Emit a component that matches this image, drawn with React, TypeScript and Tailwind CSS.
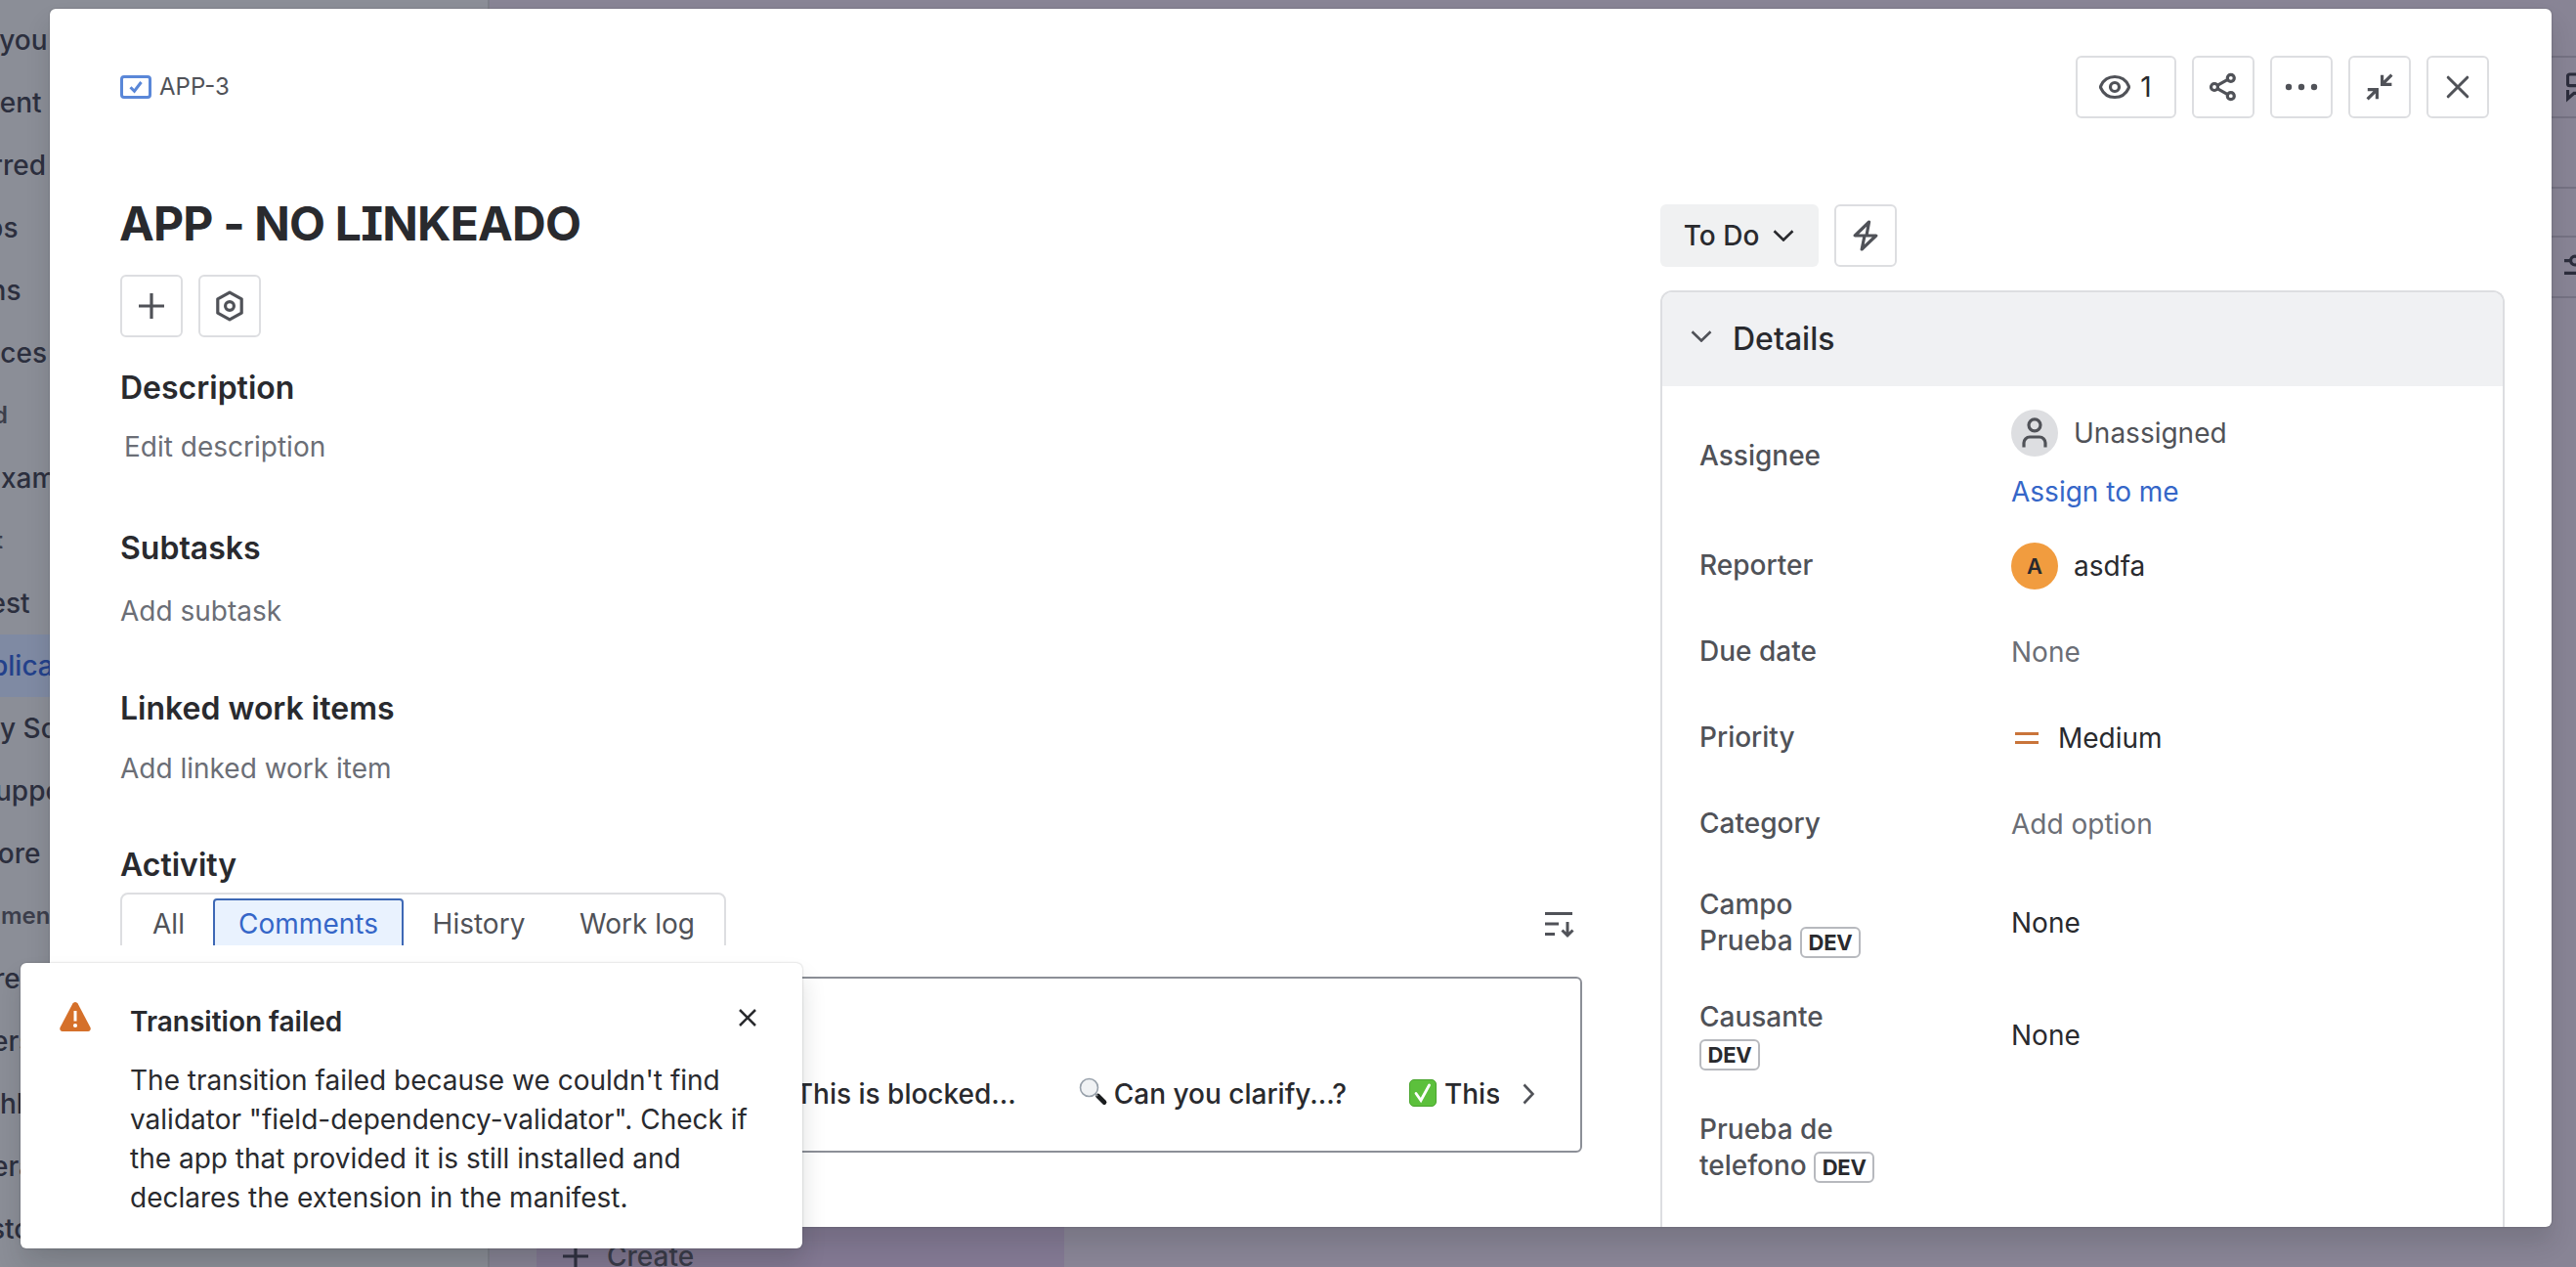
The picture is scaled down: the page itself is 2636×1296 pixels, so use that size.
import { ReactNode } from "react";

type SidebarItem = {
  text: string;
  left?: number;
  right?: number;
  muted?: boolean;
  active?: boolean;
};

const sidebarItems: SidebarItem[] = [
  { text: "For you", right: 48.5 },
  { text: "Recent", right: 42.5 },
  { text: "Starred", right: 47 },
  { text: "Apps", right: 18.5 },
  { text: "Plans", right: 21.5 },
  { text: "Spaces", right: 48 },
  { text: "Starred", right: 8, muted: true },
  { text: "xample", left: 1 },
  { text: "Test", right: 3, muted: true },
  { text: "Test", right: 30.5 },
  { text: "plication", left: -9, active: true },
  { text: "y Software", left: 0 },
  { text: "upport", left: -5 },
  { text: "More", right: 41.5 },
  { text: "mended", left: 1, muted: true },
  { text: "re", left: -6 },
  { text: "ers", left: -8 },
  { text: "hl", left: 0 },
  { text: "era", left: -8 },
  { text: "stom", left: -10 },
];

function SidebarRow({ text, left, right, muted, active }: SidebarItem) {
  return (
    <div className={active ? "h-16 overflow-hidden bg-[#7f8aa3]" : "h-16 overflow-hidden"}>
      <div
        className="flex h-16 items-center"
        style={right !== undefined ? { width: right, justifyContent: "flex-end" } : { marginLeft: left }}
      >
        <span
          className={
            muted
              ? "whitespace-nowrap text-[24px] font-semibold text-[#3c3e4b]"
              : active
                ? "whitespace-nowrap text-[28px] font-medium text-[#23418b]"
                : "whitespace-nowrap text-[28px] font-medium text-[#2c2f3e]"
          }
        >
          {text}
        </span>
      </div>
    </div>
  );
}

function IconButton({ children, wide }: { children: ReactNode; wide?: boolean }) {
  return (
    <button
      className={
        wide
          ? "flex h-16 w-[103px] items-center justify-center gap-[10px] rounded-[6px] border-2 border-[#dddee1] pr-px text-[28px] text-[#292a2e]"
          : "flex size-16 items-center justify-center rounded-[6px] border-2 border-[#dddee1]"
      }
    >
      {children}
    </button>
  );
}

function Svg({ children, size = 32, color = "#505258" }: { children: ReactNode; size?: number; color?: string }) {
  return (
    <svg
      width={size}
      height={size}
      viewBox="0 0 16 16"
      fill="none"
      stroke={color}
      strokeWidth={1.6}
      className="shrink-0"
    >
      {children}
    </svg>
  );
}

function Dev() {
  return (
    <span className="inline-flex h-8 w-[62px] items-center justify-center rounded-[6px] border-2 border-[#b7b9be] bg-white text-[22px] font-bold tracking-[-0.01em] text-[#292a2e]">
      DEV
    </span>
  );
}

function Row({ label, children, tall }: { label: ReactNode; children?: ReactNode; tall?: boolean }) {
  return (
    <div className={tall ? "flex h-[115px] items-center" : "flex h-[88px] items-center"}>
      <div className="w-[319px] text-[28px] leading-[37px] font-medium text-[#505258]">{label}</div>
      <div className={tall ? "flex items-center text-[28px] text-[#292a2e]" : "flex items-center pt-0.5 text-[28px] text-[#292a2e]"}>
        {children}
      </div>
    </div>
  );
}

function Backdrop() {
  return (
    <div className="flex h-full w-full bg-[#888495]">
      <aside className="h-full w-[501px] shrink-0 border-r-2 border-[#7d7f89] bg-[#8b8e97] pt-[9px]">
        {sidebarItems.map((item, i) => (
          <SidebarRow key={i} {...item} />
        ))}
      </aside>
      <div className="flex h-full flex-1 flex-col justify-end pl-[48px]">
        <div className="flex h-12 w-[540px] items-center gap-4 bg-[#827892] pt-[26px] pl-6 text-[28px] font-medium text-[#3a3b49]">
          <Svg color="#2f3040">
            <path d="M8 1.5v13M1.5 8h13" />
          </Svg>
          Create
        </div>
      </div>
      <div className="h-full w-[30px] shrink-0 pt-[57px]">
        <div className="h-16 w-20 rounded-[6px] border-2 border-[#757283] pt-[14px] pl-[18px]">
          <Svg color="#2c2d3c">
            <path
              d="M2.75 1.5h10.5a1 1 0 0 1 1 1v3.800a1 1 0 0 1-1 1H2.75a1 1 0 0 1-1-1v-3.800a1 1 0 0 1 1-1ZM1.75 9.500v4.500L5 11.200h5"
              transform="translate(-1 0)"
            />
          </Svg>
        </div>
        <div className="mt-[70px] h-[2px] bg-[#757283]" />
        <div className="mt-[48px] h-16 w-20 rounded-[6px] border-2 border-[#757283] pt-[14px] pl-[16px]">
          <Svg color="#2c2d3c">
            <path d="M0 4.8h3.5M8 4.8h8M0 11.2h8" />
            <circle cx="5.5" cy="4.8" r="2.2" />
          </Svg>
        </div>
      </div>
    </div>
  );
}

function ModalHeader() {
  return (
    <header className="flex h-40 shrink-0 items-center justify-between pr-16 pl-[72px]">
      <div className="flex items-center gap-2 text-[24px] text-[#505258]">
        <svg width="32" height="24" viewBox="0 0 32 24" fill="none" stroke="#5a87d8" strokeWidth="3">
          <rect x="1.5" y="1.5" width="29" height="21" rx="2.5" />
          <path d="M10.5 12.2l4 4L21.5 7" />
        </svg>
        APP-3
      </div>
      <div className="flex gap-4">
        <IconButton wide>
          <Svg>
            <path d="M8 2.75C4.2 2.75 1.9 5.2.95 7.3a1.7 1.7 0 0 0 0 1.4C1.9 10.8 4.2 13.25 8 13.25s6.1-2.45 7.05-4.55a1.7 1.7 0 0 0 0-1.4C14.1 5.2 11.8 2.75 8 2.75Z" />
            <circle cx="8" cy="8" r="2.25" />
          </Svg>
          1
        </IconButton>
        <IconButton>
          <Svg>
            <circle cx="3.5" cy="8" r="1.75" />
            <circle cx="11.9" cy="3.4" r="1.75" />
            <circle cx="11.9" cy="12.6" r="1.75" />
            <path d="M5 7.200l5.300-3M5 8.800l5.300 3" />
          </Svg>
        </IconButton>
        <IconButton>
          <svg width="34" height="8" viewBox="0 0 34 8" fill="#505258">
            <circle cx="4" cy="4" r="3.2" />
            <circle cx="17" cy="4" r="3.2" />
            <circle cx="30" cy="4" r="3.2" />
          </svg>
        </IconButton>
        <IconButton>
          <Svg>
            <path d="M14.200 1.800L9.300 6.700M9.300 1.900v4.800h4.900M1.800 14.200l4.900-4.900M1.900 9.300h4.800v4.800" />
          </Svg>
        </IconButton>
        <IconButton>
          <Svg>
            <path d="M3.100 3.100l9.800 9.800M12.900 3.100L3.100 12.900" strokeLinecap="round" strokeWidth="1.500" />
          </Svg>
        </IconButton>
      </div>
    </header>
  );
}

function Activity() {
  return (
    <>
      <h2 className="mt-[59px] h-10 text-[32px] leading-10 font-semibold">Activity</h2>
      <div className="mt-[8px] flex h-[54px] justify-between overflow-hidden">
        <div className="flex h-16 w-[620px] items-start rounded-[8px] border-2 border-[#dddee1] pt-1 text-[28px] text-[#505258]">
          <span className="flex h-[52px] w-[93px] items-center justify-center pl-0.5">All</span>
          <span className="flex h-[52px] w-[195px] items-center justify-center rounded-[4px] border-2 border-[#3e68b5] bg-[#e9f2fe] text-[#3566c8]">
            Comments
          </span>
          <span className="flex h-[52px] w-[154px] items-center justify-center">History</span>
          <span className="flex h-[52px] flex-1 items-center justify-center pr-1">Work log</span>
        </div>
        <svg width="32" height="32" viewBox="0 0 32 32" fill="none" stroke="#505258" strokeWidth="3" className="mt-[18px] mr-[7px]">
          <path d="M1 3.5h28M1 14h14M1 24.500h10M24 12v14M18.500 20.500l5.500 5.500 5.500-5.500" />
        </svg>
      </div>
      <div className="mt-8 flex h-[180px] shrink-0 items-start justify-end rounded-[6px] border-2 border-[#8c8f97] pt-[98px] pr-[47px] text-[28px] leading-10 font-medium whitespace-nowrap">
        <span className="mr-[64px]">This is blocked...</span>
        <svg width="30" height="30" viewBox="0 0 30 30" className="mt-[3px] mr-1.5">
          <path d="M19.500 19l6.500 6.500" stroke="#1b1d1f" strokeWidth="4.800" strokeLinecap="round" />
          <path d="M16 16l3 3" stroke="#8f9499" strokeWidth="2" />
          <circle cx="10.500" cy="10.500" r="9" fill="#f0f2f4" stroke="#98a1ab" strokeWidth="1.600" />
        </svg>
        <span className="mr-[64px]">Can you clarify...?</span>
        <svg width="28" height="28" viewBox="0 0 28 28" className="mt-[5px] mr-2">
          <rect x=".5" y=".5" width="27" height="27" rx="4.500" fill="#5cc03c" stroke="#4aa52e" />
          <path d="M7 14.500l5 7L20.500 6" fill="none" stroke="#fff" strokeWidth="2.800" strokeLinecap="round" />
        </svg>
        <span className="w-[56px] overflow-hidden">This is on track...</span>
        <svg width="12" height="22" viewBox="0 0 12 22" fill="none" stroke="#505258" strokeWidth="2.600" className="mt-[9px] ml-6">
          <path d="M1.500 1.500L10.500 11l-9 9.500" />
        </svg>
      </div>
    </>
  );
}

function MainColumn() {
  return (
    <main className="flex w-[1496px] shrink-0 flex-col">
      <h1 className="mt-8 -ml-px h-14 text-[48px] leading-[56px] font-bold tracking-[-0.017em] [font-feature-settings:'cv08']">
        APP - NO LINKEADO
      </h1>
      <div className="mt-6 flex gap-4">
        <IconButton>
          <Svg>
            <path d="M8 1.500v13M1.500 8h13" />
          </Svg>
        </IconButton>
        <IconButton>
          <Svg>
            <path d="M8 1.100l6.100 3.300v7.200L8 14.900l-6.100-3.300V4.400Z" strokeLinejoin="round" />
            <circle cx="8" cy="8" r="2.200" />
          </Svg>
        </IconButton>
      </div>
      <h2 className="mt-8 h-10 text-[32px] leading-10 font-semibold">Description</h2>
      <p className="mt-5 h-10 pl-1 text-[28px] leading-10 text-[#6b6e76]">Edit description</p>
      <h2 className="mt-16 h-10 text-[32px] leading-10 font-semibold">Subtasks</h2>
      <p className="mt-6 h-10 text-[28px] leading-10 text-[#6b6e76]">Add subtask</p>
      <h2 className="mt-[60px] h-10 text-[32px] leading-10 font-semibold">Linked work items</h2>
      <p className="mt-[21px] h-10 text-[28px] leading-10 text-[#6b6e76]">Add linked work item</p>
      <Activity />
    </main>
  );
}

function Chevron({ color }: { color: string }) {
  return (
    <svg width="22" height="12" viewBox="0 0 22 12" fill="none" stroke={color} strokeWidth="2.600">
      <path d="M1.500 1.200l9.500 9.300 9.500-9.300" />
    </svg>
  );
}

function DetailsColumn() {
  return (
    <aside className="ml-20 flex w-[864px] flex-col pt-10">
      <div className="flex gap-4">
        <button className="flex h-16 w-[162px] items-center justify-center gap-[14px] rounded-[6px] bg-[#f0f1f2] pr-px text-[28px] font-medium">
          To Do
          <Chevron color="#292a2e" />
        </button>
        <IconButton>
          <Svg>
            <path d="M9.800 1L2.600 8h4.900L6.100 15l7.300-7H8.500Z" strokeLinejoin="round" />
          </Svg>
        </IconButton>
      </div>
      <section className="mt-6 flex-1 overflow-hidden rounded-t-[12px] border-2 border-b-0 border-[#dddee1]">
        <div className="flex h-24 items-center gap-[21px] bg-[#f0f1f3] pl-[29px] text-[32px] font-medium">
          <span className="-mt-1.5">
            <Chevron color="#505258" />
          </span>
          Details
        </div>
        <div className="pl-[38px]">
          <div className="flex h-[139px] items-center">
            <div className="w-[319px] pt-0.5 text-[28px] leading-10 font-medium text-[#505258]">Assignee</div>
            <div className="pt-4 text-[28px] leading-10">
              <div className="flex h-[60px] items-center text-[#505258]">
                <span className="mr-4 flex size-12 items-center justify-center rounded-full bg-[#dddee1]">
                  <Svg>
                    <circle cx="8" cy="3.900" r="3" />
                    <path d="M2.500 15.200v-2.200a3 3 0 0 1 3-3h5a3 3 0 0 1 3 3v2.200" />
                  </Svg>
                </span>
                Unassigned
              </div>
              <a className="flex h-[60px] items-center text-[#3566c8]">Assign to me</a>
            </div>
          </div>
          <Row label="Reporter">
            <span className="mr-4 flex size-12 items-center justify-center rounded-full bg-[#f19c3f] text-[22px] font-semibold">A</span>
            asdfa
          </Row>
          <Row label="Due date">
            <span className="text-[#6b6e76]">None</span>
          </Row>
          <Row label="Priority">
            <svg width="32" height="32" viewBox="0 0 32 32" stroke="#c9743a" strokeWidth="3" className="mr-4">
              <path d="M4 11.500h24M4 20.500h24" />
            </svg>
            Medium
          </Row>
          <Row label="Category">
            <span className="text-[#6b6e76]">Add option</span>
          </Row>
          <Row tall label={<>Campo<br />Prueba <Dev /></>}>None</Row>
          <Row tall label={<>Causante<br /><Dev /></>}>None</Row>
          <Row tall label={<>Prueba de<br />telefono <Dev /></>} />
        </div>
      </section>
    </aside>
  );
}

function TransitionFlag() {
  return (
    <div className="absolute top-[985px] left-[21px] flex h-[292px] w-[800px] rounded-[6px] bg-white pt-8 pl-[38px] shadow-[0_16px_24px_rgba(30,31,33,0.15),0_0_2px_rgba(30,31,33,0.31)]">
      <svg width="36" height="36" viewBox="0 0 36 36" className="mt-[5px] shrink-0">
        <path d="M15.400 4.500a3 3 0 0 1 5.200 0L33.500 29a2.800 2.800 0 0 1-2.500 4H5a2.800 2.800 0 0 1-2.500-4Z" fill="#d5702a" />
        <path d="M18 12v10.500" stroke="#fff" strokeWidth="3" />
        <circle cx="18" cy="27" r="2.100" fill="#fff" />
      </svg>
      <div className="ml-[38px] w-[651px] text-[28px] leading-10 whitespace-nowrap text-[#292a2e]">
        <div className="flex h-[61px] items-start justify-between pt-[8px]">
          <h3 className="font-semibold">Transition failed</h3>
          <svg width="20" height="20" viewBox="0 0 20 20" stroke="#292a2e" strokeWidth="2.500" className="mt-[6px] mr-[9px]">
            <path d="M2 2l16 16M18 2L2 18" />
          </svg>
        </div>
        <p className="mt-[7px]">
          The transition failed because we couldn't find
          <br />
          validator "field-dependency-validator". Check if
          <br />
          the app that provided it is still installed and
          <br />
          declares the extension in the manifest.
        </p>
      </div>
    </div>
  );
}

export default function App() {
  return (
    <div className="relative h-[1296px] w-full overflow-hidden font-['Inter',sans-serif]">
      <Backdrop />
      <div className="absolute top-[9px] left-[51px] flex h-[1246px] w-[2560px] flex-col overflow-hidden rounded-[6px] bg-white text-[#292a2e] shadow-[0_16px_24px_rgba(30,31,33,0.15),0_0_2px_rgba(30,31,33,0.31)]">
        <ModalHeader />
        <div className="flex flex-1 pl-[72px]">
          <MainColumn />
          <DetailsColumn />
        </div>
      </div>
      <TransitionFlag />
    </div>
  );
}
